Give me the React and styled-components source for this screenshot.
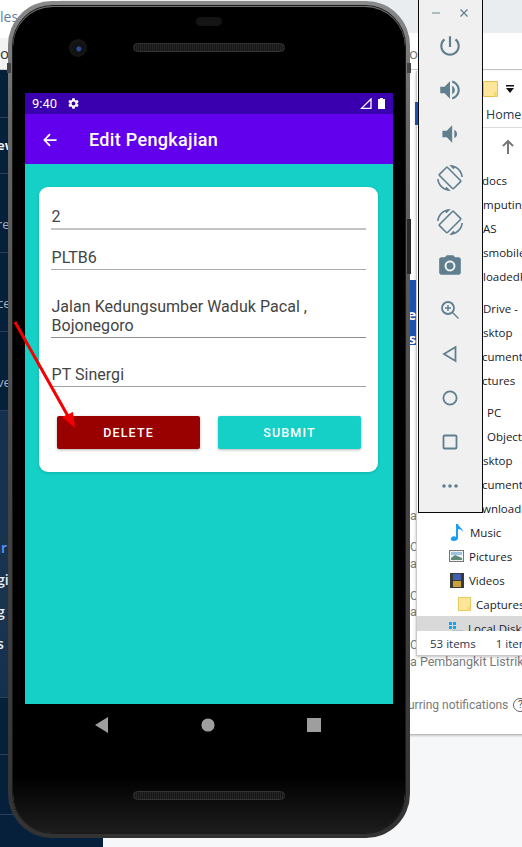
import React from "react";
import styled, { createGlobalStyle } from "styled-components";

const Global = createGlobalStyle`
  html, body { margin: 0; padding: 0; background: #fff; }
  * { box-sizing: border-box; }
  #root { width: 522px; height: 847px; overflow: hidden; }
`;

const Desktop = styled.div`
  position: relative; width: 522px; height: 847px; overflow: hidden;
  display: flex; flex-direction: column; font-family: "Open Sans", sans-serif;
`;
const TabStrip = styled.div`
  height: 33px; flex: none; background: linear-gradient(90deg, #fff 0 60px, #e9edef 60px);
  font-size: 14px; color: #5f7fa8; padding: 8px 0 0 0; line-height: 18px;
`;
const Omnibar = styled.div`
  height: 37px; flex: none; background: #fff;
  display: flex; justify-content: space-between; font-size: 15px; color: #333;
  padding-right: 104px; border-bottom: 1px solid #ccc;
`;
const OmniLeft = styled.div`
  width: 60px; margin-top: 5px; background: #f3f3f3; line-height: 30px;
`;
const OmniRight = styled.span`
  line-height: 40px; color: #777;
`;
const PageBody = styled.div`
  flex: 1; display: flex; min-height: 0;
`;
const Sidebar = styled.div`
  width: 103px; flex: none; background: #06203c; display: flex; flex-direction: column;
  font-size: 13px; font-weight: 700; color: #e6edf3;
`;
const SideRow = styled.div`
  height: ${p => p.$h}px; flex: none; border-bottom: 1px solid #2a4058;
  display: flex; align-items: flex-end; padding-bottom: 20px; line-height: 16px;
`;
const SideText = styled.span`
  margin-left: -3px; font-weight: ${p => p.$dim ? 400 : 700}; color: ${p => p.$dim ? "#9fb0bf" : "#eef2f6"};
`;
const SideLinks = styled.div`
  height: 287px; flex: none; background: linear-gradient(180deg, #14304f, #1a3450 70%, #13304f);
  border-bottom: 1px solid #2a4058; padding-top: 129px; display: flex; flex-direction: column; gap: 16px;
`;
const SideLink = styled.div`
  line-height: 16px; font-size: 14px; color: ${p => p.$active ? "#5b97ff" : "#e6edf3"};
  margin-left: -3px; font-weight: 600;
`;
const PageMain = styled.div`
  flex: 1; display: flex; flex-direction: column; background: #f6f7f9;
`;
const PageCard = styled.div`
  height: 665px; flex: none; background: #fff; border-bottom: 1px solid #b9b9b9;
  box-shadow: 0 1px 2px rgba(0,0,0,.2);
  display: flex; flex-direction: column; justify-content: flex-end;
  color: #7a7a7a; padding: 0 0 21px 307px; white-space: nowrap;
  font-family: Roboto, sans-serif; font-size: 12.5px; line-height: 16px;
`;
const Fragment = styled.div`
  margin-top: ${p => p.$gap}px;
`;
const PageNote = styled.div`
  display: flex; align-items: center; gap: 5px; font-size: 12px; margin: 27px 0 0 -2px; line-height: 16px;
`;
const HelpMark = styled.span`
  width: 14px; height: 14px; border: 1.5px solid #666; border-radius: 50%; font-size: 10px;
  display: inline-flex; align-items: center; justify-content: center; color: #555; flex: none;
`;
const Banner = styled.div`
  position: absolute; left: ${p => p.$left}px; top: ${p => p.$top}px; width: ${p => p.$w}px; height: ${p => p.$h}px;
  background: #1a50b0; color: #fff; font-weight: 700; text-align: right; font-size: 15px; line-height: 24px; padding: 22px 0 0 0;
`;
const Explorer = styled.div`
  position: absolute; left: 416px; top: 71px; width: 120px; height: 585px; background: #fff;
  border: 1px solid #c9c9c9; border-top: 0; box-shadow: 0 1px 3px rgba(0,0,0,.25);
  display: flex; flex-direction: column; font-size: 11.5px; color: #1a1a2a; overflow: hidden;
`;
const Quick = styled.div`
  height: 29px; flex: none; padding-left: 66px; display: flex; align-items: center; gap: 7px; margin-top: 3px;
`;
const QuickSep = styled.div`
  width: 1px; height: 16px; background: #aaa; margin-left: 2px;
`;
const Ribbon = styled.div`
  height: 25px; flex: none; padding-left: 69px; font-size: 12.5px; line-height: 24px; border-bottom: 1px solid #ddd; color: #2a3a50;
`;
const PathBar = styled.div`
  height: 40px; flex: none; padding-left: 84px; padding-top: 12px; color: #777;
`;
const Tree = styled.div`
  flex: 1; display: flex; flex-direction: column; min-height: 0; overflow: hidden;
`;
const TreeRow = styled.div`
  height: 24px; flex: none; display: flex; align-items: center; gap: 5px; white-space: nowrap;
  padding-left: ${p => p.$x}px; margin-top: ${p => p.$gap || 0}px;
  background: ${p => p.$selected ? "#d9d9d9" : "transparent"};
`;
const StatusLine = styled.div`
  height: 24px; flex: none; background: #fff; display: flex; align-items: center; gap: 20px; padding-left: 13px; white-space: nowrap; color: #2a3550;
`;

const Phone = styled.div`
  position: absolute; left: 8px; top: 1px; width: 402px; height: 837px; border-radius: 44px; padding: 5px;
  background: linear-gradient(180deg, #8a8a8a 0, #666 15%, #444 60%, #333 100%);
`;
const Face = styled.div`
  position: relative; width: 392px; height: 827px; border-radius: 40px;
  background: linear-gradient(180deg, #000 0, #000 93%, #1d1d1d 100%);
  box-shadow: inset 0 1px 0 rgba(255,255,255,.45), 0 0 0 1px #1a1a1a;
  display: flex; flex-direction: column; align-items: center;
`;
const Bezel = styled.div`
  height: 87px; width: 100%; flex: none; position: relative; display: flex; justify-content: center;
`;
const Earpiece = styled.div`
  position: absolute; left: 183px; top: 11px; width: 26px; height: 9px; border-radius: 5px; background: #141414;
`;
const Camera = styled.div`
  position: absolute; left: 56px; top: 33px; width: 18px; height: 18px; border-radius: 50%;
  background: radial-gradient(circle at 55% 55%, #2c4a9a 0 2px, #111 3px, #1a1a1a 100%);
`;
const Speaker = styled.div`
  width: 152px; height: 9px; flex: none; border-radius: 5px; background: repeating-linear-gradient(90deg, #262626 0 1px, #161616 1px 2px);
  border: 1px solid #333; margin-top: ${p => p.$top}px;
`;
const SideKey = styled.div`
  position: absolute; top: ${p => p.$top}px; ${p => p.$side}: -1px; width: 4px; height: ${p => p.$h}px; background: ${p => p.$c || "#444"};
`;
const Screen = styled.div`
  width: 368px; height: 611px; flex: none; background: #14d0c6; display: flex; flex-direction: column;
  font-family: Roboto, sans-serif;
`;
const StatusBar = styled.div`
  height: 21px; flex: none; background: #3a00b0; color: #fff; display: flex; align-items: center;
  padding: 0 8px 0 7px; font-size: 13px; gap: 10px;
`;
const Spacer = styled.div`flex: 1;`;
const AppBar = styled.div`
  height: 50px; flex: none; background: #6200ee; color: #fff; display: flex; align-items: center; padding: 1px 0 0 18px; gap: 32px;
  font-size: 18px; font-weight: 500; letter-spacing: .32px;
`;
const Card = styled.div`
  margin: 23px 15px 0 14px; height: 285px; background: #fff; border-radius: 9px; padding: 20px 12px 0 12px;
  box-shadow: 0 1px 3px rgba(0,0,0,.15); display: flex; flex-direction: column;
`;
const Field = styled.div`
  margin-top: ${p => p.$gap || 0}px; font-size: 16px; line-height: 19px; color: #444; letter-spacing: .04px; padding-left: .5px;
  border-bottom: ${p => p.$w || 1.5}px solid ${p => p.$line || "#a9a9a9"}; padding-bottom: 2px;
`;
const Buttons = styled.div`
  display: flex; gap: 18px; margin: 29px 5px 0 6px;
`;
const Button = styled.div`
  flex: 1; height: 33px; border-radius: 2px; background: ${p => p.$bg}; color: #fff; display: flex; align-items: center; justify-content: center;
  font-size: 12.5px; font-weight: 500; letter-spacing: 1.15px; box-shadow: 0 1px 3px rgba(0,0,0,.3);
`;
const NavBar = styled.div`
  width: 100%; height: 42px; flex: none; display: flex; align-items: center; padding: 0 84px 0 82px; justify-content: space-between;
`;
const NavIcon = styled.svg`display: block; fill: #9e9e9e;`;

const Toolbar = styled.div`
  position: absolute; left: 418px; top: 0; width: 65px; height: 513px; background: #f0f0f0;
  border: 1.5px solid #0a0a0a; border-top: 0; display: flex; flex-direction: column; align-items: center; padding-right: 1px;
`;
const ToolHead = styled.div`
  height: 24px; width: 100%; flex: none; display: flex; align-items: center; justify-content: space-between; padding: 2px 12px 0 12px;
`;
const ToolSlot = styled.div`
  height: 44px; width: 100%; flex: none; display: flex; align-items: center; justify-content: center;
`;
const ToolSvg = styled.svg`display: block; fill: #5f7f8f;`;
const Overlay = styled.svg`
  position: absolute; left: 0; top: 0; pointer-events: none;
`;

const T = ({ d, size = 26, flip, children }) => (
  <ToolSvg width={size} height={size} viewBox="0 0 24 24" transform={flip ? "scale(-1 1)" : undefined}>
    {d && <path d={d} />}{children}
  </ToolSvg>
);
const rotate = "M16.48 2.52c3.27 1.55 5.61 4.72 5.97 8.48h1.5C23.44 4.84 18.29 0 12 0l-.66.03 3.81 3.81 1.33-1.32zm-6.25-.77c-.59-.59-1.54-.59-2.12 0L1.75 8.11c-.59.59-.59 1.54 0 2.12l12.02 12.02c.59.59 1.54.59 2.12 0l6.36-6.36c.59-.59.59-1.54 0-2.12L10.23 1.75zm4.6 19.44L2.81 9.17l6.36-6.36 12.02 12.02-6.36 6.36zm-7.31.29C4.25 19.94 1.91 16.76 1.55 13H.05C.56 19.16 5.71 24 12 24l.66-.03-3.81-3.81-1.33 1.32z";

const Folder = ({ w = 15, h = 16 }) => (
  <svg width={w} height={h} viewBox="0 0 15 16">
    <path d="M.5 .5h14v15H.5z" fill="#fde59a" stroke="#e6c04a" />
    <path d="M11 11h3.5v4.5H11z" fill="#f7d774" />
  </svg>
);

const groups = [
  [["docs", 65], ["mputing", 66], ["AS", 66], ["smobile", 66], ["loadedF", 66]],
  [["Drive - ", 66], ["sktop", 66], ["cument", 65], ["ctures", 65]],
  [["PC", 70], ["Objects", 70], ["sktop", 66], ["cument", 65], ["wnload", 65]],
];

export default function App() {
  return (
    <Desktop>
      <Global />
      <TabStrip>les</TabStrip>
      <Omnibar><OmniLeft>or</OmniLeft><OmniRight>o</OmniRight></Omnibar>
      <PageBody>
        <Sidebar>
          <SideRow $h={48} />
          <SideRow $h={56}><SideText>ew</SideText></SideRow>
          <SideRow $h={79}><SideText $dim>re</SideText></SideRow>
          <SideRow $h={79}><SideText $dim>ce</SideText></SideRow>
          <SideRow $h={79}><SideText $dim>ve</SideText></SideRow>
          <SideLinks>
            <SideLink $active>ir</SideLink>
            <SideLink>gi</SideLink>
            <SideLink>g</SideLink>
            <SideLink>s</SideLink>
          </SideLinks>
          <SideRow $h={57} />
          <SideRow $h={60} />
        </Sidebar>
        <PageMain>
          <PageCard>
            <Fragment $gap={0}>a</Fragment>
            <Fragment $gap={15}>C</Fragment>
            <Fragment $gap={1}>a</Fragment>
            <Fragment $gap={16}>C</Fragment>
            <Fragment $gap={0}>a</Fragment>
            <Fragment $gap={17}>C</Fragment>
            <Fragment $gap={1}>a Pembangkit Listrik</Fragment>
            <PageNote>urring notifications <HelpMark>?</HelpMark></PageNote>
          </PageCard>
        </PageMain>
      </PageBody>

      <Explorer>
        <Quick>
          <Folder />
          <svg width="10" height="8" viewBox="0 0 10 8"><path d="M1 0h8v1.4H1zM1 3h8L5 8z" fill="#111" /></svg>
          <QuickSep />
        </Quick>
        <Ribbon>Home</Ribbon>
        <PathBar>
          <svg width="14" height="14" viewBox="0 0 14 14"><path d="M7 1v13M2 6l5-5 5 5" stroke="#777" strokeWidth="2" fill="none" /></svg>
        </PathBar>
        <Tree>
          {groups.map((g, i) => g.map(([t, x], j) => (
            <TreeRow key={i + "-" + j} $x={x} $gap={i > 0 && j === 0 ? 8 : 0}>{t}</TreeRow>
          )))}
          <TreeRow $x={33}>
            <svg width="15" height="18" viewBox="0 0 15 18"><path d="M6 1h2c.5 3 5 4 5 8-1-2-3-3-5-3v9c0 2-2 3-4 3s-4-1-3-3 4-2 5-1z" fill="#1c9ff0" /></svg>
            Music
          </TreeRow>
          <TreeRow $x={32}>
            <svg width="15" height="12" viewBox="0 0 15 12"><rect x=".5" y=".5" width="14" height="11" fill="#eef2f5" stroke="#777" /><path d="M2 8l4-3 7 3v2H2z" fill="#5d8a78" /><rect x="2" y="2" width="11" height="3" fill="#9cc4e0" /></svg>
            Pictures
          </TreeRow>
          <TreeRow $x={33}>
            <svg width="14" height="15" viewBox="0 0 14 15"><rect width="14" height="15" fill="#3a3a3a" /><rect x="3" y="1" width="8" height="6" fill="#3f5fb0" /><rect x="3" y="8" width="8" height="6" fill="#c9a23a" /></svg>
            Videos
          </TreeRow>
          <TreeRow $x={41}><Folder w={13} h={16} /> Captures</TreeRow>
          <TreeRow $x={32} $selected>
            <svg width="14" height="12" viewBox="0 0 14 12"><path d="M0 0h3v3H0zM4 0h3v3H4zM0 4h3v3H0zM4 4h3v3H4z" fill="#12a8f0" /><rect x="3" y="8" width="11" height="4" fill="#b9c0c8" /></svg>
            Local Disk
          </TreeRow>
        </Tree>
        <StatusLine><span>53 items</span><span>1 item</span></StatusLine>
      </Explorer>

      <Banner $left={405} $top={280} $w={11} $h={65}>e<br />s</Banner>
      <Banner $left={415} $top={102} $w={3} $h={23} />

      <Phone>
        <SideKey $side="left" $top={62} $h={10} />
        <SideKey $side="right" $top={62} $h={10} />
        <SideKey $side="right" $top={218} $h={55} $c="#2a2a2a" />
        <Face>
          <Bezel>
            <Earpiece />
            <Camera />
            <Speaker $top={37} />
          </Bezel>
          <Screen>
            <StatusBar>
              <span>9:40</span>
              <svg width="13" height="13" viewBox="0 0 24 24" fill="#fff"><path d="M19.14 12.94c.04-.3.06-.61.06-.94 0-.32-.02-.64-.07-.94l2.03-1.58a.49.49 0 0 0 .12-.61l-1.92-3.32a.49.49 0 0 0-.59-.22l-2.39.96c-.5-.38-1.03-.7-1.62-.94l-.36-2.54a.48.48 0 0 0-.48-.41h-3.84c-.24 0-.43.17-.47.41l-.36 2.54c-.59.24-1.13.57-1.62.94l-2.39-.96a.48.48 0 0 0-.59.22L2.74 8.87c-.12.21-.08.47.12.61l2.03 1.58c-.05.3-.09.63-.09.94s.02.64.07.94l-2.03 1.58a.49.49 0 0 0-.12.61l1.92 3.32c.12.22.37.29.59.22l2.39-.96c.5.38 1.03.7 1.62.94l.36 2.54c.05.24.24.41.48.41h3.84c.24 0 .44-.17.47-.41l.36-2.54c.59-.24 1.13-.56 1.62-.94l2.39.96c.22.08.47 0 .59-.22l1.92-3.32a.48.48 0 0 0-.12-.61l-2.01-1.58zM12 15.6a3.6 3.6 0 1 1 0-7.2 3.6 3.6 0 0 1 0 7.2z" /></svg>
              <Spacer />
              <svg width="12" height="11" viewBox="0 0 12 11"><path d="M11 1v9.4H1.5z" fill="none" stroke="#fff" strokeWidth="1.3" /></svg>
              <svg width="7" height="11" viewBox="0 0 7 11" style={{ marginLeft: -4 }}><path d="M2 0h3v1h2v10H0V1h2z" fill="#fff" /></svg>
            </StatusBar>
            <AppBar>
              <svg width="14" height="14" viewBox="0 0 16 16" fill="none" stroke="#fff" strokeWidth="2"><path d="M15.5 8H2M8 1.2 1.6 8 8 14.8" /></svg>
              <span>Edit Pengkajian</span>
            </AppBar>
            <Card>
              <Field $w={2} $line="#c4c4c4">2</Field>
              <Field $gap={18} $line="#acacac">PLTB6</Field>
              <Field $gap={27} $line="#8e8e8e">Jalan Kedungsumber Waduk Pacal , Bojonegoro</Field>
              <Field $gap={27} $line="#a0a0a0">PT Sinergi</Field>
              <Buttons>
                <Button $bg="#990000">DELETE</Button>
                <Button $bg="#14d0c6">SUBMIT</Button>
              </Buttons>
            </Card>
          </Screen>
          <NavBar>
            <NavIcon width="14" height="16" viewBox="0 0 14 16"><path d="M13 0v16L0 8z" /></NavIcon>
            <NavIcon width="14" height="14" viewBox="0 0 14 14"><circle cx="7" cy="7" r="6.6" /></NavIcon>
            <NavIcon width="14" height="14" viewBox="0 0 14 14"><rect width="14" height="14" /></NavIcon>
          </NavBar>
          <Speaker $top={45} />
        </Face>
      </Phone>

      <Toolbar>
        <ToolHead>
          <svg width="10" height="10" viewBox="0 0 10 10"><path d="M1 5h8" stroke="#86989f" strokeWidth="1.2" /></svg>
          <svg width="10" height="10" viewBox="0 0 10 10"><path d="M1.5 1.5l7 7M8.5 1.5l-7 7" stroke="#5f7f8f" strokeWidth="1.2" /></svg>
        </ToolHead>
        <ToolSlot><T d="M13 3h-2v10h2V3zm4.83 2.17l-1.42 1.42C17.99 7.86 19 9.81 19 12c0 3.87-3.13 7-7 7s-7-3.13-7-7c0-2.19 1.01-4.14 2.58-5.42L6.17 5.17C4.23 6.82 3 9.26 3 12c0 4.97 4.03 9 9 9s9-4.03 9-9c0-2.74-1.23-5.18-3.17-6.83z" /></ToolSlot>
        <ToolSlot><T d="M3 9v6h4l5 5V4L7 9H3zm13.5 3c0-1.77-1.02-3.29-2.5-4.03v8.05c1.48-.73 2.5-2.25 2.5-4.02zM14 3.23v2.06c2.89.86 5 3.54 5 6.71s-2.11 5.85-5 6.71v2.06c4.01-.91 7-4.49 7-8.77s-2.99-7.86-7-8.77z" /></ToolSlot>
        <ToolSlot><T d="M18.5 12c0-1.77-1.02-3.29-2.5-4.03v8.05c1.48-.73 2.5-2.25 2.5-4.02zM5 9v6h4l5 5V4L9 9H5z" /></ToolSlot>
        <ToolSlot><T d={rotate} /></ToolSlot>
        <ToolSlot><T d={rotate} flip /></ToolSlot>
        <ToolSlot><T d="M12 15.2a3.2 3.2 0 1 0 0-6.4 3.2 3.2 0 0 0 0 6.4zM9 2 7.17 4H4c-1.1 0-2 .9-2 2v12c0 1.1.9 2 2 2h16c1.1 0 2-.9 2-2V6c0-1.1-.9-2-2-2h-3.17L15 2H9zm3 15c-2.76 0-5-2.24-5-5s2.24-5 5-5 5 2.24 5 5-2.24 5-5 5z" /></ToolSlot>
        <ToolSlot>
          <svg width="20" height="20" viewBox="0 0 20 20" fill="none" stroke="#5f7f8f" strokeWidth="1.8"><circle cx="8" cy="8" r="6" /><path d="M12.5 12.5 18.5 18.5M8 5v6M5 8h6" strokeWidth="1.4" /></svg>
        </ToolSlot>
        <ToolSlot>
          <svg width="16" height="18" viewBox="0 0 16 18" fill="none" stroke="#5f7f8f" strokeWidth="1.8"><path d="M13.5 2v14L2 9z" /></svg>
        </ToolSlot>
        <ToolSlot>
          <svg width="16" height="16" viewBox="0 0 16 16" fill="none" stroke="#5f7f8f" strokeWidth="1.8"><circle cx="8" cy="8" r="6.6" /></svg>
        </ToolSlot>
        <ToolSlot>
          <svg width="16" height="16" viewBox="0 0 16 16" fill="none" stroke="#5f7f8f" strokeWidth="1.8"><rect x="1.5" y="1.5" width="13" height="13" rx="1" /></svg>
        </ToolSlot>
        <ToolSlot>
          <svg width="16" height="4" viewBox="0 0 16 4" fill="#5f7f8f"><circle cx="2" cy="2" r="1.8" /><circle cx="8" cy="2" r="1.8" /><circle cx="14" cy="2" r="1.8" /></svg>
        </ToolSlot>
      </Toolbar>

      <Overlay width="522" height="847" viewBox="0 0 522 847">
        <path d="M15 322 L69 418" stroke="#f40000" strokeWidth="3" fill="none" />
        <path d="M75 428 L62 417 L73 412 Z" fill="#f40000" />
      </Overlay>
    </Desktop>
  );
}
